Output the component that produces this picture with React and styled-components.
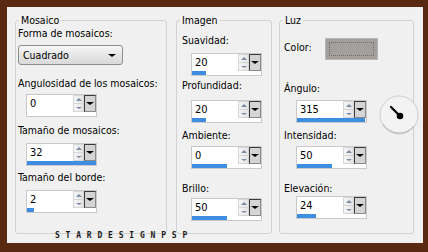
import React from 'react';
import styled, { createGlobalStyle } from 'styled-components';

const GlobalStyle = createGlobalStyle`
  html, body {
    margin: 0;
    padding: 0;
    background: #5a2912;
  }
  body {
    font-family: "DejaVu Sans Condensed", "Liberation Sans", sans-serif;
    font-size: 10.5px;
    color: #000;
  }
`;

const Frame = styled.div`
  width: 428px;
  height: 252px;
  box-sizing: border-box;
  padding: 7px 5px 9px 7px;
  background: #5a2912;
`;

const Panel = styled.div`
  position: relative;
  height: 100%;
  box-sizing: border-box;
  background: #f0f0f0;
  padding: 7px 9px 9px 8px;
  display: flex;
`;

const Group = styled.fieldset`
  margin: 0 0 0 ${p => p.$gap || 0}px;
  padding: 0;
  width: ${p => p.$w}px;
  box-sizing: border-box;
  border: 1px solid #d2d2d2;
  border-radius: 3px;
  min-width: 0;
`;

const Legend = styled.legend`
  margin-left: 3px;
  padding: 0 2px;
  line-height: 13px;
`;

const Column = styled.div`
  display: flex;
  flex-direction: column;
  align-items: flex-start;
  padding-left: ${p => p.$pl}px;
`;

const Label = styled.div`
  line-height: 13px;
  margin-top: ${p => p.$mt || 0}px;
  white-space: nowrap;
`;

const Select = styled.div`
  margin-top: ${p => p.$mt || 0}px;
  width: 105px;
  height: 20px;
  box-sizing: border-box;
  border: 1px solid #8e8e8e;
  border-radius: 3px;
  background: linear-gradient(#f7f7f7, #e6e6e6 50%, #d9d9d9);
  display: flex;
  align-items: center;
  justify-content: space-between;
  padding: 0 6px 0 4px;
`;

const DownTri = styled.span`
  width: 0;
  height: 0;
  border-left: ${p => p.$s}px solid transparent;
  border-right: ${p => p.$s}px solid transparent;
  border-top: ${p => Math.round(p.$s * 0.75)}px solid ${p => p.$c || '#000'};
`;

const UpTri = styled.span`
  width: 0;
  height: 0;
  border-left: 3px solid transparent;
  border-right: 3px solid transparent;
  border-bottom: 3px solid #7d8ba3;
`;

const SpinBox = styled.div`
  margin-top: ${p => p.$mt || 0}px;
  margin-left: ${p => p.$ml || 0}px;
  width: 71px;
  height: 23px;
  box-sizing: border-box;
  border: 1px solid #c9c9c9;
  background: #fff;
  display: flex;
  flex-direction: column;
  flex-shrink: 0;
`;

const SpinTop = styled.div`
  display: flex;
  height: 17px;
`;

const SpinValue = styled.div`
  flex: 1;
  padding-left: 3px;
  line-height: 17px;
  font-size: 11px;
`;

const Arrows = styled.div`
  width: 11px;
  box-sizing: border-box;
  border: 1px solid #d6d6d6;
  background: linear-gradient(90deg, #f6f6f6, #e4e4e4);
  display: flex;
  flex-direction: column;
`;

const ArrowHalf = styled.div`
  flex: 1;
  display: flex;
  align-items: center;
  justify-content: center;
  & + & {
    border-top: 1px solid #d6d6d6;
  }
`;

const DropBtn = styled.div`
  width: 12px;
  box-sizing: border-box;
  border: 1px solid #3a3a3a;
  border-right-color: #8a8a8a;
  border-bottom-color: #8a8a8a;
  background: #d4d4d4;
  display: flex;
  align-items: center;
  justify-content: center;
`;

const Track = styled.div`
  height: 4px;
  background: #fff;
`;

const Fill = styled.div`
  height: 4px;
  background: #3d8ee0;
`;

const Row = styled.div`
  display: flex;
  align-items: flex-start;
  margin-top: ${p => p.$mt || 0}px;
`;

const ColorRow = styled.div`
  display: grid;
  grid-template-columns: 41px 53px;
  align-items: start;
  margin-top: ${p => p.$mt || 0}px;
`;

const Swatch = styled.div`
  width: 53px;
  height: 22px;
  box-sizing: border-box;
  border: 1px solid #b9b6b4;
  background: #a29f9d;
  padding: 3px;
  & > div {
    height: 100%;
    box-sizing: border-box;
    border: 1px dotted #6e6b69;
  }
`;

const Dial = styled.svg`
  margin: -6px 0 -13px 11px;
  flex-shrink: 0;
`;

const Watermark = styled.div`
  position: absolute;
  left: 48px;
  top: 225px;
  font-family: "DejaVu Sans Mono", "Liberation Mono", monospace;
  font-weight: bold;
  font-size: 8px;
  line-height: 8px;
  letter-spacing: 5.8px;
  color: #1a1a1a;
`;

function Spin({ value, fill, mt, ml }) {
  return (
    <SpinBox $mt={mt} $ml={ml}>
      <SpinTop>
        <SpinValue>{value}</SpinValue>
        <Arrows>
          <ArrowHalf><UpTri /></ArrowHalf>
          <ArrowHalf><DownTri $s={3} $c="#7d8ba3" /></ArrowHalf>
        </Arrows>
        <DropBtn><DownTri $s={4} /></DropBtn>
      </SpinTop>
      <Track>
        <Fill style={{ width: `${fill * 100}%` }} />
      </Track>
    </SpinBox>
  );
}

export default function App() {
  return (
    <>
      <GlobalStyle />
      <Frame>
        <Panel>
          <Group $w={152}>
            <Legend>Mosaico</Legend>
            <Column $pl={2}>
              <Label>Forma de mosaicos:</Label>
              <Select $mt={5}>
                <span>Cuadrado</span>
                <DownTri $s={4} />
              </Select>
              <Label $mt={12}>Angulosidad de los mosaicos:</Label>
              <Spin value="0" fill={0} mt={4} ml={8} />
              <Label $mt={7}>Tamaño de mosaicos:</Label>
              <Spin value="32" fill={1} mt={6} ml={8} />
              <Label $mt={5}>Tamaño del borde:</Label>
              <Spin value="2" fill={0.1} mt={6} ml={8} />
            </Column>
          </Group>

          <Group $w={96} $gap={9}>
            <Legend>Imagen</Legend>
            <Column $pl={5}>
              <Label $mt={7}>Suavidad:</Label>
              <Spin value="20" fill={0.21} mt={6} ml={9} />
              <Label $mt={3}>Profundidad:</Label>
              <Spin value="20" fill={0.21} mt={8} ml={9} />
              <Label $mt={6}>Ambiente:</Label>
              <Spin value="0" fill={0.51} mt={4} ml={9} />
              <Label $mt={13}>Brillo:</Label>
              <Spin value="50" fill={0.51} mt={3} ml={9} />
            </Column>
          </Group>

          <Group $w={135} $gap={7}>
            <Legend>Luz</Legend>
            <Column $pl={4}>
              <ColorRow $mt={11}>
                <Label $mt={3}>Color:</Label>
                <Swatch><div /></Swatch>
              </ColorRow>
              <Label $mt={22}>Ángulo:</Label>
              <Row $mt={5}>
                <Spin value="315" fill={0.98} ml={12} />
                <Dial width="42" height="42" viewBox="0 0 42 42">
                  <circle cx="21" cy="21" r="19" fill="#f3f3f3" stroke="#cdcdcd" />
                  <path d="M5 30 A19 19 0 0 0 36 32" fill="none" stroke="#b5b5b5" />
                  <line x1="13" y1="13" x2="22" y2="22" stroke="#000" strokeWidth="2.2" strokeLinecap="round" />
                  <circle cx="22" cy="22" r="3.3" fill="#000" />
                </Dial>
              </Row>
              <Label $mt={6}>Intensidad:</Label>
              <Spin value="50" fill={0.5} mt={4} ml={12} />
              <Label $mt={13}>Elevación:</Label>
              <Spin value="24" fill={0.27} mt={1} ml={12} />
            </Column>
          </Group>

          <Watermark>STARDESIGNPSP</Watermark>
        </Panel>
      </Frame>
    </>
  );
}
